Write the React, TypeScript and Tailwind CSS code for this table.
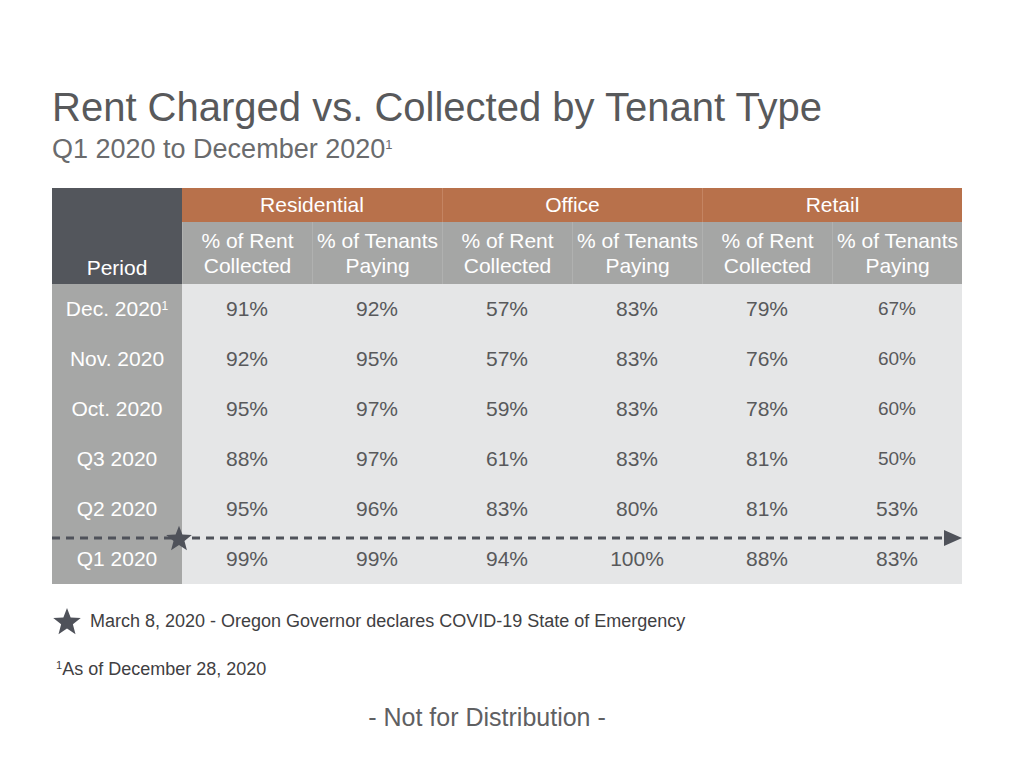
// Rent charged vs. collected — slide table
const groups = ['Residential', 'Office', 'Retail'];

type Row = { period: string; sup?: boolean; values: string[]; smallLast?: boolean };

const rows: Row[] = [
  { period: 'Dec. 2020', sup: true, values: ['91%', '92%', '57%', '83%', '79%', '67%'], smallLast: true },
  { period: 'Nov. 2020', values: ['92%', '95%', '57%', '83%', '76%', '60%'], smallLast: true },
  { period: 'Oct. 2020', values: ['95%', '97%', '59%', '83%', '78%', '60%'], smallLast: true },
  { period: 'Q3 2020', values: ['88%', '97%', '61%', '83%', '81%', '50%'], smallLast: true },
  { period: 'Q2 2020', values: ['95%', '96%', '83%', '80%', '81%', '53%'] },
  { period: 'Q1 2020', values: ['99%', '99%', '94%', '100%', '88%', '83%'] },
];

function Star({ size, className }: { size: number; className?: string }) {
  return (
    <svg width={size} height={size} viewBox="0 0 24 24" className={className}>
      <path
        d="M12 1.5l2.9 7.6 8.1.4-6.3 5.1 2.1 7.9L12 18l-6.8 4.5 2.1-7.9L1 9.5l8.1-.4z"
        fill="#4f525a"
      />
    </svg>
  );
}

export default function App() {
  return (
    <div
      className="w-[1024px] h-[768px] bg-white text-[#555555] pl-[52px] pt-[84px]"
      style={{ fontFamily: '"Liberation Sans", Arial, sans-serif' }}
    >
      <h1 className="text-[40px] leading-[46px] text-[#58595b]">
        Rent Charged vs. Collected by Tenant Type
      </h1>
      <p className="text-[27px] leading-[30px] text-[#6a6b6d] mt-[4px]">
        Q1 2020 to December 2020<span className="text-[13px] relative -top-[9px]">1</span>
      </p>

      <div className="relative mt-[19px] w-[910px]">
        <div className="grid grid-cols-[130px_repeat(6,130px)]">
          <div className="row-span-2 bg-[#53565c] text-white text-[21px] flex items-end justify-center pb-[1px]">
            Period
          </div>
          {groups.map((g, i) => (
            <div
              key={g}
              className={`col-span-2 h-[34px] bg-[#b8714b] text-white text-[21px] flex items-center justify-center ${
                i > 0 ? 'border-l border-[#c48462]' : ''
              }`}
            >
              {g}
            </div>
          ))}
          {groups.map((g) => (
            <>
              <div
                key={g + 'a'}
                className="h-[62px] bg-[#a5a6a5] text-white text-[21px] leading-[25px] flex flex-col items-center justify-center border-l border-[#b0b1b0]"
              >
                <span>% of Rent</span>
                <span>Collected</span>
              </div>
              <div
                key={g + 'b'}
                className="h-[62px] bg-[#a5a6a5] text-white text-[21px] leading-[25px] flex flex-col items-center justify-center border-l border-[#b0b1b0]"
              >
                <span>% of Tenants</span>
                <span>Paying</span>
              </div>
            </>
          ))}

          {rows.map((r) => (
            <>
              <div
                key={r.period}
                className="h-[50px] bg-[#a6a7a6] text-white text-[21px] flex items-center justify-center"
              >
                <span>
                  {r.period}
                  {r.sup && <span className="text-[12px] relative -top-[6px]">1</span>}
                </span>
              </div>
              {r.values.map((v, i) => (
                <div
                  key={r.period + i}
                  className={`h-[50px] bg-[#e5e6e7] text-[#58595b] flex items-center justify-center ${
                    i === 5 && r.smallLast ? 'text-[19px]' : 'text-[21px]'
                  }`}
                >
                  {v}
                </div>
              ))}
            </>
          ))}
        </div>

        {/* COVID marker line between Q2 and Q1 */}
        <svg width="910" height="16" viewBox="0 0 910 16" className="absolute left-0 top-[342px]">
          <line x1="0" y1="8" x2="896" y2="8" stroke="#4f525a" strokeWidth="3" strokeDasharray="8 6" />
          <path d="M892 0L910 8L892 16z" fill="#4f525a" />
        </svg>
        <Star size={28} className="absolute left-[113px] top-[336px]" />
      </div>

      <div className="mt-[22px] flex items-center gap-[8px]">
        <Star size={30} />
        <span className="text-[18px] text-[#3f4042]">
          March 8, 2020 - Oregon Governor declares COVID-19 State of Emergency
        </span>
      </div>

      <p className="mt-[20px] text-[18px] text-[#3f4042] ml-[4px]">
        <span className="text-[11px] relative -top-[6px]">1</span>As of December 28, 2020
      </p>

      <p className="mt-[16px] text-[25px] text-[#5f6062] w-[910px] text-center -ml-[20px]">
        - Not for Distribution -
      </p>
    </div>
  );
}
